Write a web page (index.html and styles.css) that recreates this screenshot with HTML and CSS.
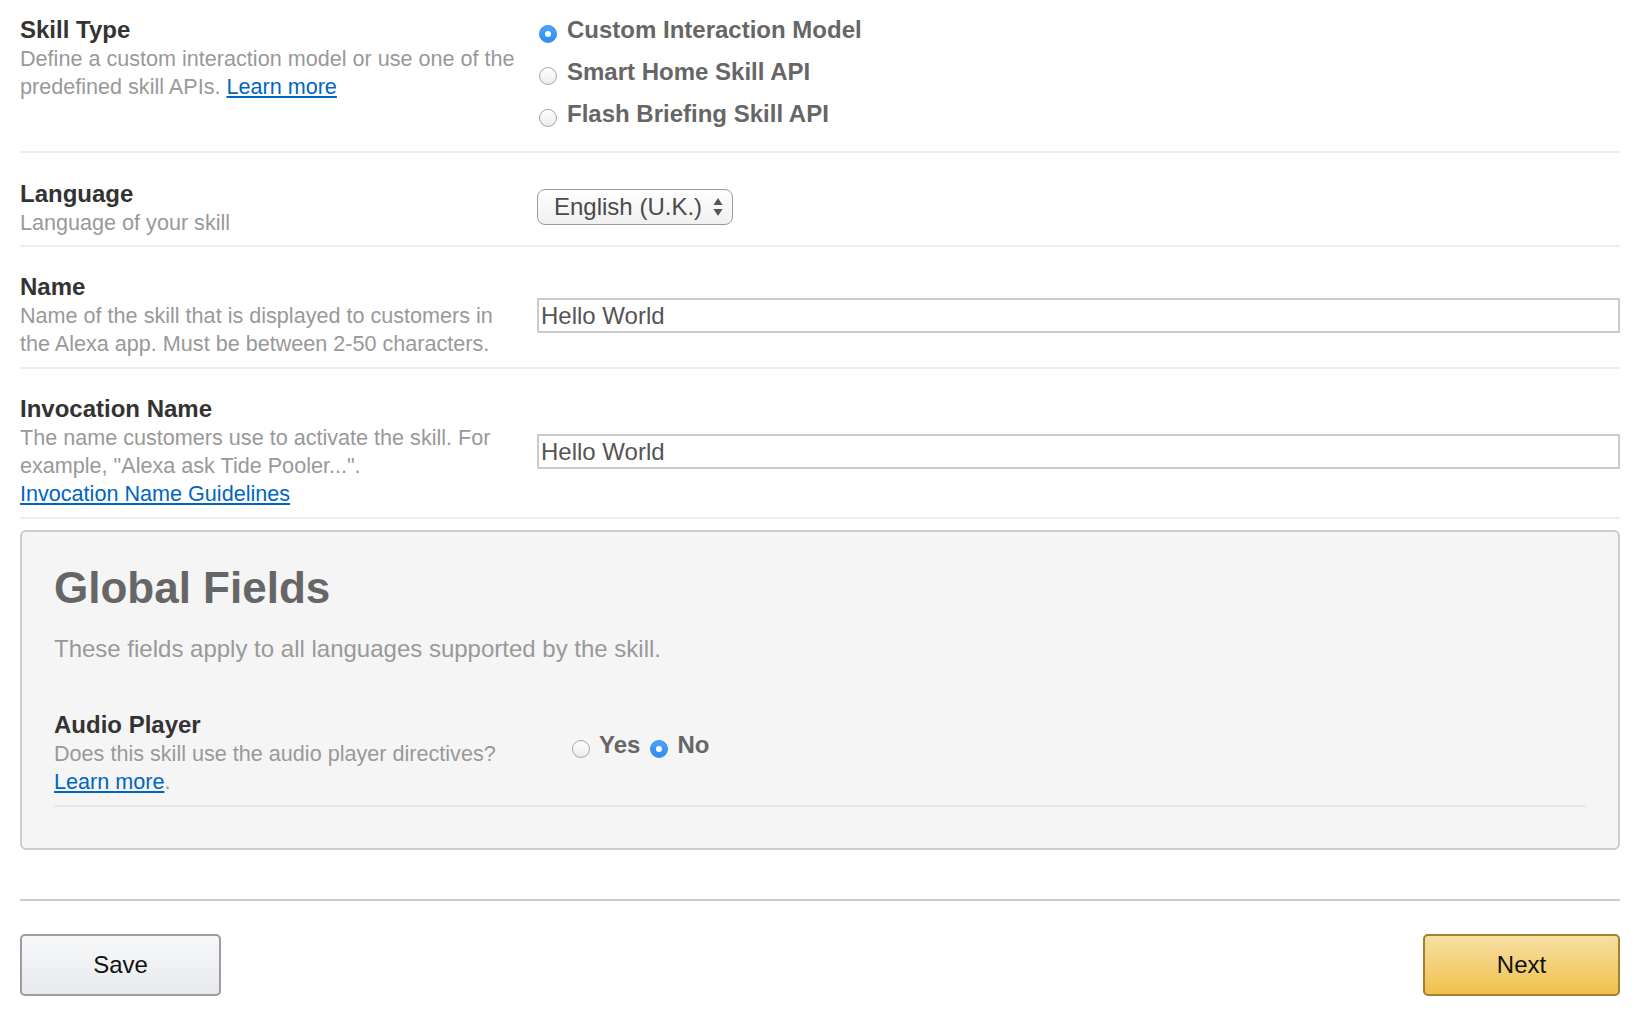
FILE: index.html
```html
<!DOCTYPE html>
<html lang="en">
<head>
<meta charset="utf-8">
<title>Skill Information</title>
<link rel="stylesheet" href="styles.css">
</head>
<body>
<div class="page">
  <div class="row row-first">
    <div class="label-col">
      <div class="field-title">Skill Type</div>
      <div class="field-desc">Define a custom interaction model or use one of the predefined skill APIs. <a href="#" class="link">Learn more</a></div>
    </div>
    <div class="radio-list">
      <label class="radio-item"><span class="radio checked"></span><span class="radio-text">Custom Interaction Model</span></label>
      <label class="radio-item"><span class="radio"></span><span class="radio-text">Smart Home Skill API</span></label>
      <label class="radio-item"><span class="radio"></span><span class="radio-text">Flash Briefing Skill API</span></label>
    </div>
  </div>

  <div class="row row-lang">
    <div class="label-col">
      <div class="field-title">Language</div>
      <div class="field-desc">Language of your skill</div>
    </div>
    <div class="control-col">
      <div class="select-box">
        <span class="select-text">English (U.K.)</span>
        <svg class="select-arrows" width="10" height="20" viewBox="0 0 10 20"><path d="M5 1 L9.5 8 L0.5 8 Z" fill="#555"/><path d="M0.5 12 L9.5 12 L5 19 Z" fill="#555"/></svg>
      </div>
    </div>
  </div>

  <div class="row">
    <div class="label-col">
      <div class="field-title">Name</div>
      <div class="field-desc">Name of the skill that is displayed to customers in the Alexa app. Must be between 2-50 characters.</div>
    </div>
    <div class="control-col">
      <div class="text-input">Hello World</div>
    </div>
  </div>

  <div class="row">
    <div class="label-col">
      <div class="field-title">Invocation Name</div>
      <div class="field-desc">The name customers use to activate the skill. For example, "Alexa ask Tide Pooler...".<br><a href="#" class="link">Invocation Name Guidelines</a></div>
    </div>
    <div class="control-col">
      <div class="text-input">Hello World</div>
    </div>
  </div>

  <div class="global-box">
    <h2 class="global-title">Global Fields</h2>
    <p class="global-sub">These fields apply to all languages supported by the skill.</p>
    <div class="row row-audio">
      <div class="label-col">
        <div class="field-title">Audio Player</div>
        <div class="field-desc">Does this skill use the audio player directives?<br><a href="#" class="link">Learn more</a>.</div>
      </div>
      <div class="inline-radios">
        <label class="radio-item"><span class="radio"></span><span class="radio-text">Yes</span></label>
        <label class="radio-item"><span class="radio checked"></span><span class="radio-text">No</span></label>
      </div>
    </div>
  </div>

  <div class="footer">
    <button class="btn btn-save">Save</button>
    <button class="btn btn-next">Next</button>
  </div>
</div>
</body>
</html>
```

FILE: styles.css
```css
html, body {
  margin: 0;
  padding: 0;
  background: #fff;
}

body {
  font-family: "Liberation Sans", Arial, Helvetica, sans-serif;
  color: #333;
}

.page {
  padding: 0 24px 0 20px;
}

.row {
  display: grid;
  grid-template-columns: 500px 1fr;
  column-gap: 17px;
  align-items: center;
  padding: 25px 0 9px;
  border-bottom: 2px solid #eeeeee;
}

.row-first {
  align-items: start;
  padding: 15px 0 22px;
}

.row-lang {
  padding: 26px 0 8px;
}

.field-title {
  font-size: 24px;
  line-height: 30px;
  font-weight: bold;
  color: #333;
}

.field-desc {
  font-size: 21.6px;
  line-height: 28px;
  color: #999;
}

.link {
  color: #0066c0;
  text-decoration: underline;
}

.radio-list {
  display: flex;
  flex-direction: column;
  gap: 12px;
  margin-top: 0;
  margin-left: 2px;
}

.radio-item {
  display: flex;
  align-items: center;
  height: 30px;
}

.radio {
  position: relative;
  box-sizing: border-box;
  width: 18px;
  height: 18px;
  border-radius: 50%;
  border: 1px solid #a8a8a8;
  background: linear-gradient(#ffffff, #ebebeb);
  margin-top: 7px;
  margin-right: 10px;
  flex: none;
}

.radio.checked {
  border-color: #3a8ee8;
  background: linear-gradient(#4aa2fb, #2f8cf2);
}

.radio.checked::after {
  content: "";
  position: absolute;
  left: 5px;
  top: 5px;
  width: 6px;
  height: 6px;
  border-radius: 50%;
  background: #fff;
}

.radio-text {
  font-size: 24px;
  line-height: 30px;
  font-weight: bold;
  color: #666;
}

.control-col {
  display: flex;
}

.select-box {
  box-sizing: border-box;
  width: 196px;
  height: 36px;
  margin-bottom: 2px;
  display: flex;
  align-items: center;
  justify-content: space-between;
  padding: 0 9px 0 16px;
  border: 1.5px solid #9c9c9c;
  border-radius: 8px;
  background: linear-gradient(#fefefe, #f0f0f0);
}

.select-text {
  font-size: 24px;
  color: #4a4a4a;
}

.select-arrows {
  display: block;
}

.text-input {
  box-sizing: border-box;
  width: 100%;
  height: 35px;
  border: 2px solid #cbcbcb;
  padding: 0 2px;
  font-size: 24px;
  line-height: 31px;
  color: #555;
  background: #fff;
}

.global-box {
  margin-top: 11px;
  border: 2px solid #cdcdcd;
  border-radius: 6px;
  background: #f5f5f5;
  padding: 31px 32px 41px 32px;
}

.global-title {
  margin: 0;
  font-size: 44px;
  line-height: 50px;
  font-weight: bold;
  color: #666;
}

.global-sub {
  margin: 21px 0 0;
  font-size: 24px;
  line-height: 30px;
  color: #999;
}

.row-audio {
  margin-top: 46px;
  padding: 0 0 9px;
  border-bottom: 2px solid #e8e8e8;
}

.inline-radios {
  display: flex;
  align-items: center;
  margin-bottom: 16px;
  margin-left: 1px;
}

.inline-radios .radio {
  margin-right: 9px;
  margin-top: 8px;
}

.inline-radios .radio-item + .radio-item {
  margin-left: 10px;
}

.footer {
  margin-top: 49px;
  border-top: 2px solid #cccccc;
  padding-top: 33px;
  display: flex;
  justify-content: space-between;
}

.btn {
  box-sizing: border-box;
  height: 62px;
  border-radius: 5px;
  font-family: "Liberation Sans", Arial, Helvetica, sans-serif;
  font-size: 24px;
  color: #111;
  cursor: pointer;
}

.btn-save {
  width: 201px;
  border: 2px solid #9c9ca2;
  background: linear-gradient(#f7f8fa, #e7e9ec);
}

.btn-next {
  width: 197px;
  border: 2px solid #a0812f;
  background: linear-gradient(#f7dfa5, #f0c14b);
}
```
